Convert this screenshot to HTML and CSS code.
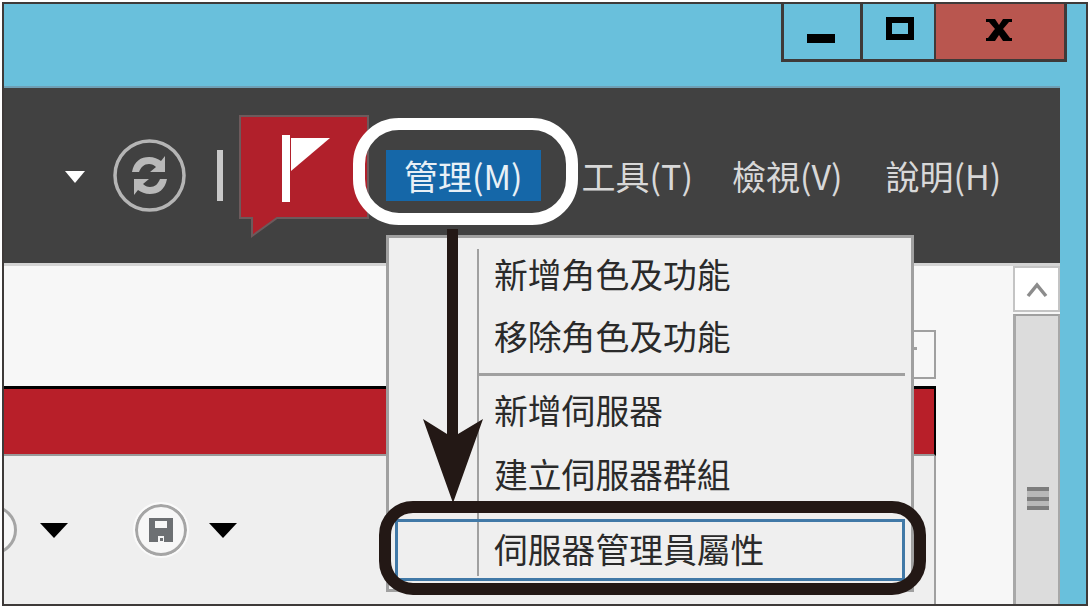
FILE: index.html
```html
<!DOCTYPE html>
<html lang="zh-Hant">
<head>
    <meta charset="UTF-8">
    <meta name="viewport" content="width=device-width, initial-scale=1.0">
    <title>伺服器管理員</title>
    <link rel="stylesheet" href="styles.css">
</head>
<body>

<div class="frame">
    <div class="titlebar">
        <div class="controls">
            <div class="ctl ctl-min"><span class="min-glyph"></span></div>
            <div class="ctl ctl-max"><span class="max-glyph"></span></div>
            <div class="ctl ctl-close">
                <svg class="close-glyph" width="28" height="24" viewBox="0 0 28 24"><path d="M1 1h9l4 6 4-6h9v3h-3l-6 7 1 1 6 8h2v3h-9l-4-6-4 6H1v-3h2l6-8 1-1-6-7H1z" fill="#000"/></svg>
            </div>
        </div>
    </div>

    <div class="toolbar">
        <span class="caret-white"></span>
        <svg class="refresh" width="73" height="73" viewBox="0 0 73 73">
            <circle cx="36.500" cy="36.500" r="34.500" fill="none" stroke="#b5b5b5" stroke-width="3.500"/>
            <path d="M19 33c2-11 9-15 17-15 5 0 9 2 12 4l4-5v16H37l6-5c-2-2-4-3-7-3-5 0-8 3-10 8z" fill="#b9b9b9"/>
            <path d="M54 40c-2 11-9 15-17 15-5 0-9-2-12-4l-4 5V40h15l-6 5c2 2 4 3 7 3 5 0 8-3 10-8z" fill="#b9b9b9"/>
        </svg>
        <span class="divider"></span>
        <svg class="flag" width="132" height="124" viewBox="0 0 132 124">
            <path d="M2 2h128v102H39l-25 18 0-18H2z" fill="#b1202b" stroke="#6d5a5c" stroke-width="2"/>
            <rect x="44" y="21" width="8" height="67" fill="#fff"/>
            <path d="M53 24h39L53 57z" fill="#fff"/>
        </svg>
        <div class="menubar">
            <span class="menubar-item active">管理(M)</span>
            <span class="menubar-item">工具(T)</span>
            <span class="menubar-item view">檢視(V)</span>
            <span class="menubar-item help">說明(H)</span>
        </div>
    </div>

    <div class="content">
        <div class="pane">
            <div class="pane-top">
                <div class="search-box"><span class="search-tick"></span></div>
            </div>
            <div class="alert"></div>
            <div class="pane-tools">
                <span class="cut-circle"></span>
                <span class="caret-black first-caret"></span>
                <span class="save-circle">
                    <svg width="26" height="26" viewBox="0 0 26 26"><path d="M1 1h24v24H16v-6H10v6H1z" fill="#6d7073"/><rect x="7" y="4" width="12" height="7" fill="#f7f7f7"/><rect x="12" y="21" width="3" height="3" fill="#6d7073"/></svg>
                </span>
                <span class="caret-black"></span>
            </div>
        </div>
        <div class="gap"></div>
        <div class="scrollbar">
            <div class="scroll-up">
                <svg width="22" height="17" viewBox="0 0 22 17"><path d="M2 15 11 4l9 11" fill="none" stroke="#8c8c8c" stroke-width="3.500"/></svg>
            </div>
            <div class="scroll-track">
                <div class="grip"><span></span><span></span><span></span></div>
            </div>
        </div>
    </div>

    <!-- dropdown -->
    <div class="dropmenu">
        <div class="drop-item">新增角色及功能</div>
        <div class="drop-item">移除角色及功能</div>
        <div class="drop-sep"></div>
        <div class="drop-item">新增伺服器</div>
        <div class="drop-item lower">建立伺服器群組</div>
        <div class="drop-item selected">伺服器管理員屬性</div>
    </div>

    <!-- annotations -->
    <div class="ring-white"></div>
    <div class="ring-black"></div>
    <svg class="arrow" width="62" height="275" viewBox="0 0 62 275">
        <path d="M25 0h11v205l25-15-30 84L1 190l24 15z" fill="#231815"/>
    </svg>
</div>

</body>
</html>
```

FILE: styles.css
```css
html, body {
    margin: 0;
    padding: 0;
    background: #fff;
}
body {
    font-family: "Noto Sans CJK TC", "Noto Sans", sans-serif;
    width: 1091px;
    height: 609px;
    overflow: hidden;
}
.frame {
    position: relative;
    box-sizing: border-box;
    width: 1086px;
    height: 604px;
    margin: 2px;
    border: 2px solid #3e3a39;
    background: #69c0dc;
    display: flex;
    flex-direction: column;
}

/* title bar */
.titlebar {
    height: 82px;
    display: flex;
    justify-content: flex-end;
    align-items: flex-start;
    padding-right: 19px;
}
.controls {
    display: flex;
    height: 58px;
    box-sizing: border-box;
    border: 3px solid #3e3a39;
    border-top: none;
}
.ctl {
    display: flex;
    align-items: center;
    justify-content: center;
    height: 100%;
}
.ctl-min {
    width: 76px;
    border-right: 3px solid #3e3a39;
}
.ctl-max {
    width: 71px;
}
.ctl-close {
    width: 130px;
    background: #b9564f;
    border-left: 2px solid #3e3a39;
    padding-bottom: 3px;
    box-sizing: border-box;
}
.close-glyph {
    margin-right: 3px;
}
.min-glyph {
    width: 28px;
    height: 9px;
    background: #000;
    margin-top: 13px;
    margin-right: 2px;
}
.max-glyph {
    box-sizing: border-box;
    width: 28px;
    height: 23px;
    border: 6px solid #000;
    margin-bottom: 6px;
    margin-left: 2px;
}

/* dark toolbar */
.toolbar {
    box-sizing: border-box;
    height: 177px;
    margin-right: 26px;
    border-top: 2px solid #6f9fb5;
    background: #414141;
    display: flex;
    align-items: center;
    padding-left: 61px;
}
.caret-white {
    width: 0;
    height: 0;
    margin-top: 2px;
    border-left: 10px solid transparent;
    border-right: 10px solid transparent;
    border-top: 12px solid #fff;
}
.refresh {
    margin-left: 28px;
}
.divider {
    width: 6px;
    height: 51px;
    background: #c8c8c8;
    margin-left: 31px;
}
.flag {
    margin-left: 15px;
}
.menubar {
    display: flex;
    align-items: center;
    margin-left: 16px;
}
.menubar-item {
    font-size: 34px;
    line-height: 51px;
    color: #d8d8d8;
    margin-left: 41px;
    white-space: nowrap;
}
.menubar-item.view {
    margin-left: 39px;
}
.menubar-item.help {
    margin-left: 43px;
}
.menubar-item.active {
    margin-left: 0;
    padding: 0 18px;
    background: #1567a8;
    color: #e8f0f6;
}

/* main area */
.content {
    flex: 1;
    display: flex;
    min-height: 0;
    border-top: 3px solid #d4d4d4;
    background: #f7f7f7;
    margin-right: 26px;
}
.pane {
    width: 932px;
    display: flex;
    flex-direction: column;
}
.pane-top {
    height: 120px;
    display: flex;
    justify-content: flex-end;
}
.search-box {
    box-sizing: border-box;
    width: 100px;
    height: 49px;
    margin-top: 64px;
    border: 2px solid #a0a0a0;
    position: relative;
}
.search-tick {
    position: absolute;
    right: 17px;
    top: 15px;
    width: 3px;
    height: 3px;
    background: #a0a0a0;
}
.alert {
    box-sizing: border-box;
    height: 70px;
    background: #b81f29;
    border-top: 3px solid #000;
    border-right: 2px solid #000;
    border-bottom: 2px solid #9a9a9a;
}
.pane-tools {
    flex: 1;
    background: #efefef;
    border-right: 2px solid #a0a0a0;
    display: flex;
    align-items: center;
    overflow: hidden;
}
.cut-circle {
    box-sizing: border-box;
    flex: none;
    width: 50px;
    height: 50px;
    margin-left: -37px;
    border: 3px solid #a5a5a5;
    border-radius: 50%;
    background: #f7f7f7;
}
.save-circle {
    box-sizing: border-box;
    flex: none;
    width: 52px;
    height: 52px;
    margin-left: 67px;
    border: 3px solid #a5a5a5;
    border-radius: 50%;
    background: #f7f7f7;
    outline: 2px solid #fafafa;
    display: flex;
    align-items: center;
    justify-content: center;
}
.caret-black {
    flex: none;
    width: 0;
    height: 0;
    margin-left: 22px;
    border-left: 14px solid transparent;
    border-right: 14px solid transparent;
    border-top: 15px solid #000;
}
.first-caret {
    margin-left: 23px;
}
.gap {
    flex: 1;
}
.scrollbar {
    box-sizing: border-box;
    width: 47px;
    display: flex;
    flex-direction: column;
}
.scroll-up {
    box-sizing: border-box;
    height: 46px;
    background: #fff;
    border: 2px solid #c4c4c4;
    display: flex;
    align-items: center;
    justify-content: center;
}
.scroll-track {
    box-sizing: border-box;
    flex: 1;
    margin-top: 2px;
    background: #dcdcdc;
    border-top: 2px solid #a0a0a0;
    border-left: 3px solid #a8a8a8;
    border-right: 2px solid #a8a8a8;
    display: flex;
    justify-content: center;
    padding-top: 171px;
    padding-left: 1px;
}
.grip {
    width: 22px;
    height: 23px;
    display: flex;
    flex-direction: column;
    justify-content: space-between;
    background: #b8b8b8;
}
.grip span {
    height: 4px;
    background: #7d7d7d;
}

/* dropdown menu, lies over the page */
.dropmenu {
    position: absolute;
    left: 382px;
    top: 231px;
    box-sizing: border-box;
    width: 528px;
    height: 357px;
    padding: 6px 6px 0;
    background: #efefef;
    border: 3px solid #a0a0a0;
    z-index: 2;
}
.dropmenu::before {
    content: "";
    position: absolute;
    left: 88px;
    top: 11px;
    bottom: 13px;
    width: 2px;
    background: #a0a0a0;
}
.drop-item {
    box-sizing: border-box;
    height: 62px;
    padding-left: 99px;
    font-size: 33.800px;
    line-height: 60px;
    color: #2a2a2a;
    white-space: nowrap;
}
.drop-item.lower {
    margin-top: 2px;
}
.drop-sep {
    height: 3px;
    margin: 5px 0 4px 83px;
    background: #a0a0a0;
}
.drop-item.selected {
    margin-top: 13px;
    padding-left: 96px;
    border: 3px solid #4179a7;
    height: 62px;
    line-height: 54px;
    position: relative;
}

/* annotations */
.ring-white {
    position: absolute;
    left: 349px;
    top: 114px;
    box-sizing: border-box;
    width: 225px;
    height: 107px;
    border: 12px solid #fff;
    border-radius: 46px;
    z-index: 3;
}
.ring-black {
    position: absolute;
    left: 375px;
    top: 497px;
    box-sizing: border-box;
    width: 547px;
    height: 94px;
    border: 12px solid #231815;
    border-radius: 34px;
    z-index: 3;
}
.arrow {
    position: absolute;
    left: 418px;
    top: 225px;
    z-index: 4;
}
```
